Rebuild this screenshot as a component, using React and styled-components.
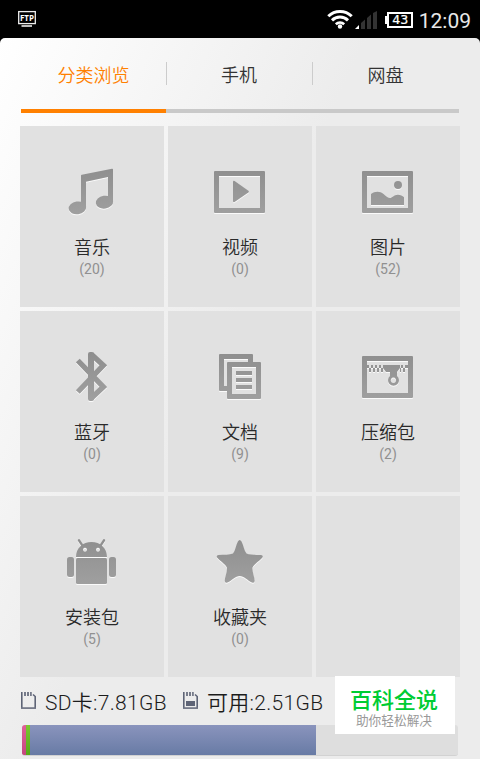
import React from "react";
import styled, { createGlobalStyle } from "styled-components";

const tabs = ["分类浏览", "手机", "网盘"];

const categories = [
  { name: "音乐", count: 20, icon: "music" },
  { name: "视频", count: 0, icon: "video" },
  { name: "图片", count: 52, icon: "image" },
  { name: "蓝牙", count: 0, icon: "bluetooth" },
  { name: "文档", count: 9, icon: "docs" },
  { name: "压缩包", count: 2, icon: "zip" },
  { name: "安装包", count: 5, icon: "android" },
  { name: "收藏夹", count: 0, icon: "star" },
];

const usage = [
  { width: 4, from: "#e0609a", to: "#c4487f" },
  { width: 4, from: "#7cc832", to: "#55a818" },
  { width: 286, from: "#8a94bd", to: "#687ba5" },
];

const Frame = () => (
  <path
    fillRule="evenodd"
    d="M5 9h49a1 1 0 0 1 1 1v40a1 1 0 0 1-1 1H5a1 1 0 0 1-1-1V10a1 1 0 0 1 1-1zM9 14v32h41V14z"
  />
);

const shapes = {
  music: (
    <>
      <path d="M19 13.6q0-.7.8-.9L50 6.7q1-.2 1 .7V40h-5V15L24 19.8V46h-5z" />
      <ellipse cx="15.4" cy="45.9" rx="8.8" ry="6.4" transform="rotate(-8 15.4 45.9)" />
      <ellipse cx="42.5" cy="40.2" rx="8.7" ry="6.4" transform="rotate(-8 42.5 40.2)" />
    </>
  ),
  video: (
    <>
      <Frame />
      <path d="M23 20q0-1.8 1.6-.9L38.4 28.8q1.2.9 0 1.8L24.6 39.9q-1.6.9-1.6-.9z" />
    </>
  ),
  image: (
    <>
      <Frame />
      <circle cx="40" cy="23" r="4" />
      <path d="M13 32c4-3 9-3 12.5 0c3 2.6 4.5 4 6.5 4s4-3.3 7.8-3.3c2.7 0 4.7 1 6.2 2.6V43H13z" />
    </>
  ),
  bluetooth: (
    <>
      <rect x="26" y="5" width="6" height="49" rx="2" />
      <path
        fill="none"
        stroke="url(#metal)"
        strokeWidth="5.4"
        strokeLinejoin="miter"
        d="M15.8 13.5 41.3 40 29.5 51M15.8 45 41.3 18.3 29.5 7.6"
      />
    </>
  ),
  docs: (
    <>
      <path d="M10 7h32q1 0 1 1v7h-5v-3H14v27h3v5h-7q-1 0-1-1V8q0-1 1-1z" />
      <path
        fillRule="evenodd"
        d="M18 15h32q1 0 1 1v35q0 1-1 1H18q-1 0-1-1V16q0-1 1-1zM22 20v27h24V20z"
      />
      <path d="M26 24h16v4H26zM26 31h16v4H26zM26 38h16v4H26z" />
    </>
  ),
  zip: (
    <>
      <Frame />
      <path d="M9 18h2v3H9zM13 18h2v3h-2zM17 18h2v3h-2zM21 18h2v3h-2zM43 18h2v3h-2zM47 18h3v3h-3z" />
      <path d="M11 21h2v4h-2zM15 21h2v4h-2zM19 21h2v4h-2zM23 21h2v4h-2zM42 21h1v4h-1zM45 21h2v4h-2z" />
      <path
        fillRule="evenodd"
        d="M25 18h17v3l-3 4v4a5.5 5.5 0 1 1-7 0v-4h-4l-3-4zM35.4 30.6a2.7 2.7 0 1 0 .01 0z"
      />
    </>
  ),
  android: (
    <>
      <path
        fill="none"
        stroke="url(#metal)"
        strokeWidth="2.4"
        strokeLinecap="round"
        d="M17 8.3l3.3 5M42 8.3l-3.3 5"
      />
      <path
        fillRule="evenodd"
        d="M14 25c0-9 7-15 15.5-15S45 16 45 25zM23 15.7a2 2 0 1 0 .01 0zM36 15.7a2 2 0 1 0 .01 0z"
      />
      <rect x="14" y="26" width="31" height="26" rx="1.5" />
      <rect x="5" y="25" width="7" height="20" rx="2.5" />
      <rect x="47" y="25" width="7" height="20" rx="2.5" />
    </>
  ),
  star: (
    <path d="M27.9 9.5q1.8-3 3.6 0C33.8 14 34 18.5 36.5 21.5c3.5 1.5 9 1 14.5 1.5q3 .8 1 3C49 29.5 44 32 42.5 35.5c-.5 4.5 2 9 2.2 13.5q-.3 2.6-2.7 1.5C37.5 48.5 34 44 29.7 44S22 48.5 17.4 50.5q-2.4 1.1-2.7-1.5c.2-4.5 2.7-9 2.2-13.5C15.4 32 10.5 29.5 7.5 26q-2-2.2 1-3c5.5-.5 11 0 14.5-1.5C25.5 18.5 25.6 14 27.9 9.5z" />
  ),
};

const CategoryIcon = ({ name }) => (
  <IconSvg viewBox="0 0 60 60">
    <defs>
      <linearGradient id="metal" gradientUnits="userSpaceOnUse" x1="0" y1="5" x2="0" y2="54">
        <stop offset="0" stopColor="#8e8e8e" />
        <stop offset="1" stopColor="#a0a0a0" />
      </linearGradient>
    </defs>
    {shapes[name]}
  </IconSvg>
);

const FtpIcon = () => (
  <svg width="20" height="18" viewBox="0 0 20 18">
    <rect x="1.7" y="1.6" width="16.6" height="12" fill="none" stroke="#eee" strokeWidth="1.3" />
    <path d="M4.5 15.2H15v1.6H4.5z" fill="#eee" />
    <text
      x="10"
      y="10.9"
      fill="#fff"
      fontFamily="Open Sans, sans-serif"
      fontSize="9.5"
      fontWeight="700"
      textAnchor="middle"
      textLength="14"
      lengthAdjust="spacingAndGlyphs"
    >
      FTP
    </text>
  </svg>
);

const WifiIcon = () => (
  <svg width="26" height="20" viewBox="0 0 26 20">
    <g fill="none" stroke="#fff" strokeWidth="3">
      <path d="M1.3 7.2a16.7 16.7 0 0 1 23.4 0" />
      <path d="M5 11.3a11.5 11.5 0 0 1 16 0" />
      <path d="M8.8 15.2a6.2 6.2 0 0 1 8.4 0" strokeWidth="2.6" />
    </g>
    <circle cx="13" cy="17.5" r="2.2" fill="#fff" />
  </svg>
);

const SignalIcon = () => (
  <svg width="22" height="18" viewBox="0 0 22 18">
    <path d="M0 18l4-4v4z" fill="#fff" />
    <path d="M6 18v-6l4-3.4V18zM12 18V7l4-3.6V18zM18 18V2l4-2v18z" fill="#333" />
  </svg>
);

const BatteryIcon = () => (
  <svg width="28" height="16" viewBox="0 0 28 16">
    <path d="M0 4h3v8H0z" fill="#fff" />
    <rect x="3" y="1" width="24" height="14" fill="none" stroke="#fff" strokeWidth="2" />
    <text
      x="15.2"
      y="12.3"
      fill="#fff"
      fontFamily="DejaVu Sans, sans-serif"
      fontSize="12"
      stroke="#fff"
      strokeWidth=".2"
      textAnchor="middle"
      textLength="16"
      lengthAdjust="spacingAndGlyphs"
    >
      43
    </text>
  </svg>
);

const CardIcon = ({ filled }) => (
  <CardSvg width="16" height="18" viewBox="0 0 16 18">
    <path
      fill="none"
      stroke="#5e6476"
      strokeWidth="1.6"
      d="M.8 0v16.2h13.4V4.5L12 2.5"
    />
    <path d="M3 0h2v4H3zM6 0h2v4H6zM9 0h1.8v4H9zM0 15.5h15V17H0z" fill="#767b8a" />
    {filled && <path d="M3 9h9v5H3z" fill="#5e6476" />}
  </CardSvg>
);

const App = () => {
  return (
    <>
      <GlobalStyle />
      <Screen>
        <StatusBar>
          <FtpIcon />
          <StatusIcons>
            <WifiIcon />
            <SignalIcon />
            <BatteryIcon />
            <Clock>12:09</Clock>
          </StatusIcons>
        </StatusBar>
        <Content>
          <Tabs>
            {tabs.map((tab, i) => (
              <Tab key={tab} $active={i === 0}>
                {tab}
              </Tab>
            ))}
          </Tabs>
          <Grid>
            {categories.map((item) => (
              <Cell key={item.name}>
                <CategoryIcon name={item.icon} />
                <Name>{item.name}</Name>
                <Count>({item.count})</Count>
              </Cell>
            ))}
            <Cell />
          </Grid>
          <Storage>
            <CardIcon />
            <StorageText $width={122}>SD卡:7.81GB</StorageText>
            <CardIcon filled />
            <StorageText>可用:2.51GB</StorageText>
          </Storage>
          <UsageBar>
            {usage.map((part) => (
              <UsagePart key={part.from} $part={part} />
            ))}
          </UsageBar>
        </Content>
        <Badge>
          <BadgeTitle>百科全说</BadgeTitle>
          <BadgeText>助你轻松解决</BadgeText>
        </Badge>
      </Screen>
    </>
  );
};

const GlobalStyle = createGlobalStyle`
  * {
    box-sizing: border-box;
  }
  body {
    margin: 0;
    background: #000;
    font-family: Roboto, "Noto Sans CJK SC", sans-serif;
    overflow: hidden;
  }
  svg {
    display: block;
    flex-shrink: 0;
  }
`;

const Screen = styled.div`
  position: relative;
  width: 480px;
  height: 759px;
  overflow: hidden;
  background: #000;
`;

const StatusBar = styled.header`
  display: flex;
  justify-content: space-between;
  height: 38px;
  padding: 10px 9px 0 17px;
`;

const StatusIcons = styled.div`
  display: flex;
  align-items: flex-end;
  height: 19px;
  svg:nth-child(2) {
    margin-left: 2px;
  }
  svg:nth-child(3) {
    margin: 0 6px 1px 8px;
  }
`;

const Clock = styled.span`
  margin-bottom: -2px;
  font-size: 21px;
  line-height: 19px;
  color: #e8e8e8;
`;

const Content = styled.main`
  height: 721px;
  padding: 0 20px;
  border-radius: 5px 5px 0 0;
  background: linear-gradient(115deg, #fff 0, #ececec 45%);
`;

const Tabs = styled.nav`
  display: grid;
  grid-template-columns: 145px 146px 147px;
  margin-left: 1px;
`;

const Tab = styled.div`
  position: relative;
  height: 75px;
  border-bottom: 4px solid ${({ $active }) => ($active ? "#ff8000" : "#c9c9c9")};
  font-size: 18px;
  font-weight: 350;
  line-height: 75px;
  text-align: center;
  color: ${({ $active }) => ($active ? "#ff8000" : "#333")};
  &:not(:first-child)::before {
    content: "";
    position: absolute;
    left: 0;
    top: 24px;
    width: 1px;
    height: 23px;
    background: #ccc;
  }
`;

const Grid = styled.section`
  display: grid;
  grid-template-columns: repeat(3, 144px);
  grid-auto-rows: 181px;
  gap: 4px;
  margin-top: 13px;
`;

const Cell = styled.div`
  display: flex;
  flex-direction: column;
  align-items: center;
  padding-top: 36px;
  background: #e1e1e1;
`;

const IconSvg = styled.svg`
  width: 60px;
  height: 60px;
  fill: url(#metal);
  filter: drop-shadow(0 1px 0 #fafafa);
`;

const Name = styled.div`
  margin-top: 13px;
  font-size: 18px;
  font-weight: 350;
  line-height: 26px;
  color: #2a2a2a;
`;

const Count = styled.div`
  margin-top: -1px;
  font-size: 14px;
  line-height: 18px;
  color: #909090;
`;

const Storage = styled.div`
  display: flex;
  align-items: center;
  height: 48px;
  padding: 0 0 2px 1px;
`;

const CardSvg = styled.svg`
  margin-top: 2px;
`;

const StorageText = styled.span`
  width: ${({ $width }) => ($width ? `${$width}px` : "auto")};
  margin: 5px 16px 0 8px;
  font-size: 21px;
  font-weight: 350;
  line-height: 26px;
  letter-spacing: 0.3px;
  white-space: nowrap;
  color: #1c1c1c;
`;

const UsageBar = styled.div`
  display: flex;
  width: 436px;
  height: 31px;
  margin-left: 2px;
  border-radius: 3px;
  border-bottom: 1px solid #d2d2d2;
  overflow: hidden;
  background: #dedede;
`;

const UsagePart = styled.div`
  width: ${({ $part }) => $part.width}px;
  background: linear-gradient(
    ${({ $part }) => $part.from},
    ${({ $part }) => $part.to}
  );
`;

const Badge = styled.aside`
  position: absolute;
  left: 335px;
  top: 676px;
  width: 120px;
  height: 58px;
  padding: 12px 2px 0 0;
  background: #fff;
  text-align: center;
`;

const BadgeTitle = styled.div`
  font-size: 22px;
  font-weight: 500;
  line-height: 26px;
  color: #00cc33;
`;

const BadgeText = styled.div`
  margin-top: -1px;
  font-size: 12.7px;
  line-height: 16px;
  color: #999;
`;

export default App;
